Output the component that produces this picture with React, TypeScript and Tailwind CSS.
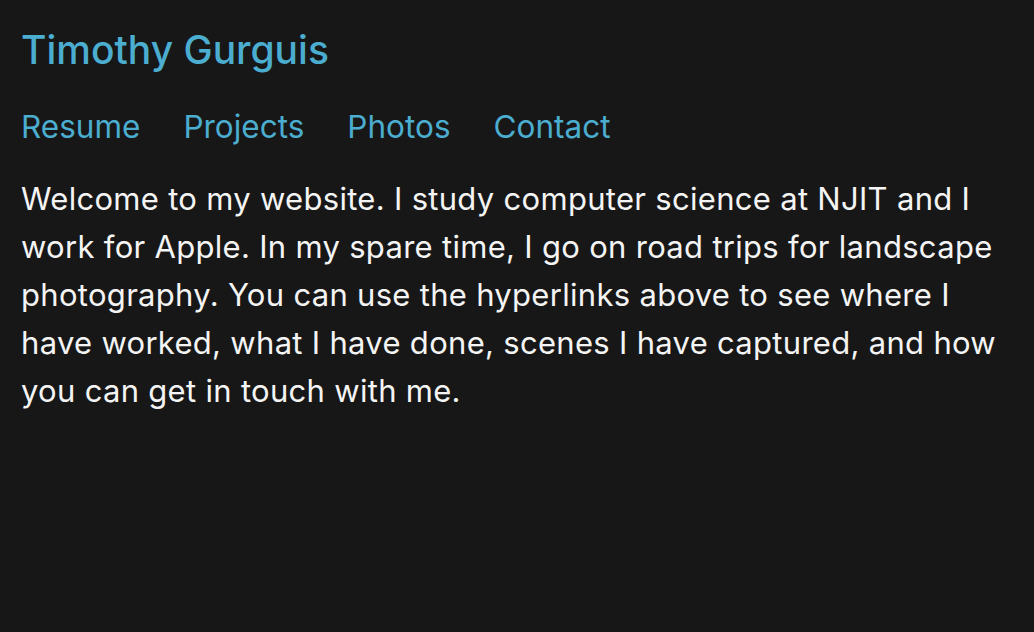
export default function App() {
  const links = ["Resume", "Projects", "Photos", "Contact"];
  return (
    <div className="min-h-screen h-[632px] bg-[#171717] px-[21px] pt-[26px] font-['Inter',sans-serif]">
      <h1 className="text-[39px] leading-[48px] font-medium text-[#4badcf]">Timothy Gurguis</h1>
      <nav className="mt-[33px] flex gap-[43px] text-[31.5px] leading-[40px] text-[#4badcf]">
        {links.map((l) => (
          <a key={l} href="#">{l}</a>
        ))}
      </nav>
      <p className="mt-[28px] text-[31px] leading-[48px] tracking-[0.3px] text-[#f4f4f4]">
        Welcome to my website. I study computer science at NJIT and I work for Apple. In my spare time, I go on road trips for landscape photography. You can use the hyperlinks above to see where I have worked, what I have done, scenes I have captured, and how you can get in touch with me.
      </p>
    </div>
  );
}
